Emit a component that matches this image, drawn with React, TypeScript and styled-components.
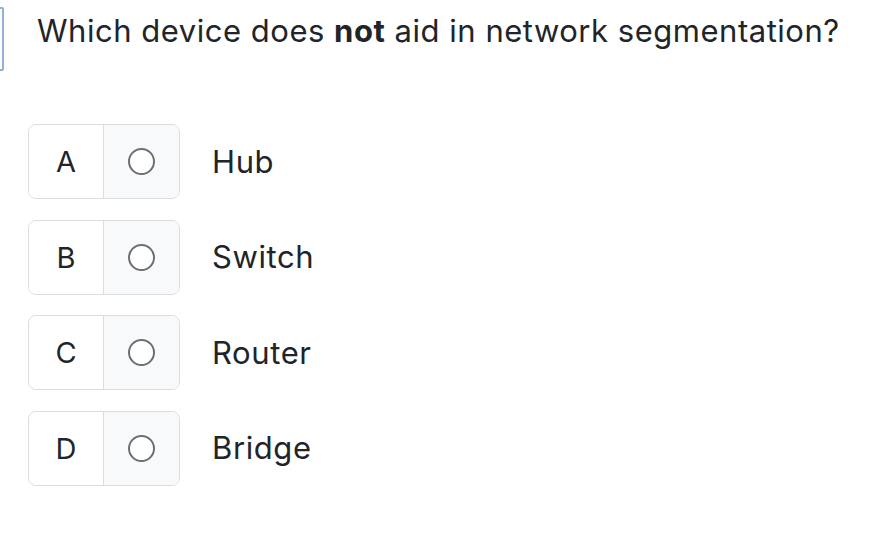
import * as React from "react";
import styled, { createGlobalStyle } from "styled-components";

const GlobalStyle = createGlobalStyle`
    html, body {
        margin: 0;
        padding: 0;
        background: #ffffff;
    }
    body {
        font-family: Inter, "Noto Sans", "Liberation Sans", sans-serif;
        color: #212529;
    }
`;

const Page = styled.div`
    position: relative;
    width: 894px;
    height: 556px;
    overflow: hidden;
`;

const EdgeFrame = styled.div`
    position: absolute;
    left: -20px;
    top: 7px;
    width: 20px;
    height: 60px;
    border: 2px solid #8fb1d6;
    border-radius: 0 2px 2px 0;
`;

const Question = styled.h1`
    margin: 0;
    padding: 13px 0 0 37px;
    font-size: 31px;
    font-weight: 400;
    line-height: 36px;
    letter-spacing: 0.52px;

    strong {
        font-weight: 700;
    }
`;

const Options = styled.div`
    display: flex;
    flex-direction: column;
    gap: 20.67px;
    padding: 75px 0 0 28px;
`;

const Option = styled.label`
    display: flex;
    align-items: center;
    gap: 32px;
    cursor: pointer;
`;

const Card = styled.div`
    display: flex;
    width: 152px;
    height: 75px;
    box-sizing: border-box;
    border: 1px solid #dadde1;
    border-radius: 8px;
    overflow: hidden;
`;

const Letter = styled.div`
    display: flex;
    align-items: center;
    justify-content: center;
    width: 74px;
    font-size: 29px;
    background: #ffffff;
    border-right: 1px solid #dadde1;
`;

const RadioCell = styled.div`
    flex: 1;
    display: flex;
    align-items: center;
    justify-content: center;
    background: #f8f9fa;
`;

const Radio = styled.span`
    display: block;
    width: 27px;
    height: 27px;
    box-sizing: border-box;
    border: 2px solid #6c6f73;
    border-radius: 50%;
    background: #ffffff;
    margin-left: -1px;
`;

const Answer = styled.span`
    font-size: 31px;
    line-height: 36px;
    letter-spacing: 0.6px;
`;

const options = [
    { letter: "A", text: "Hub" },
    { letter: "B", text: "Switch" },
    { letter: "C", text: "Router" },
    { letter: "D", text: "Bridge" },
];

export default function App() {
    return (
        <>
            <GlobalStyle />
            <Page>
                <EdgeFrame />
                <Question>
                    Which device does <strong>not</strong> aid in network segmentation?
                </Question>
                <Options>
                    {options.map((o) => (
                        <Option key={o.letter}>
                            <Card>
                                <Letter>{o.letter}</Letter>
                                <RadioCell>
                                    <Radio />
                                </RadioCell>
                            </Card>
                            <Answer>{o.text}</Answer>
                        </Option>
                    ))}
                </Options>
            </Page>
        </>
    );
}
